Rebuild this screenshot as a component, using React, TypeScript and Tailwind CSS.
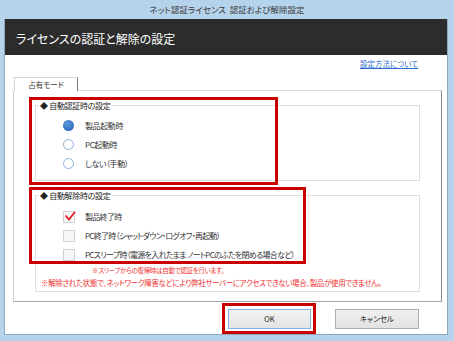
import React from "react";

const jp = "font-['Noto_Sans_CJK_JP',sans-serif] [font-feature-settings:'palt']";

function Radio({ checked, label }: { checked?: boolean; label: string }) {
  return (
    <div className="flex h-[19px] items-center pl-[27px]">
      {checked ? (
        <span className="h-[11px] w-[11px] rounded-full bg-[radial-gradient(circle_at_40%_35%,#5b96dc,#1f5fb4)]" />
      ) : (
        <span className="h-[11px] w-[11px] rounded-full border border-[#8db1dc] bg-white" />
      )}
      <span className="ml-[11px] text-[8px] leading-none tracking-[-0.4px] text-[#333]">{label}</span>
    </div>
  );
}

function Check({ checked, label }: { checked?: boolean; label: string }) {
  return (
    <div className="flex h-[19px] items-center pl-[27px]">
      <span className="relative flex h-[12px] w-[12px] items-center justify-center border border-[#d2d2d2] bg-[#f7f7f7]">
        {checked && (
          <svg width="12" height="10" viewBox="0 0 12 10" className="absolute -top-[1px] left-0">
            <path d="M1.5 4.5 L5 8.5 L11 0.8" fill="none" stroke="#e3202a" strokeWidth="1.8" />
          </svg>
        )}
      </span>
      <span className="ml-[10px] text-[8px] leading-none tracking-[-0.7px] text-[#333]">{label}</span>
    </div>
  );
}

function Group({ title, children, className }: { title: string; children: React.ReactNode; className?: string }) {
  return (
    <div className={`relative border border-[#dedede] ${className ?? ""}`}>
      <div className="absolute -top-[5px] left-[3px] bg-white px-[1px] text-[8px] leading-[10px] tracking-[-0.3px] text-[#222]">
        ◆ {title}
      </div>
      {children}
    </div>
  );
}

export default function App() {
  return (
    <div className={`relative flex h-[341px] w-[454px] flex-col overflow-hidden bg-[#b6d3ec] ${jp}`}>
      {/* window title */}
      <div className="flex h-[19px] items-center justify-center text-[8.5px] text-[#3a3a3a]">
        ネット認証ライセンス&nbsp;&nbsp;認証および解除設定
      </div>

      <div className="ml-[4px] mr-[6px] mb-[6px] flex flex-1 flex-col border-x border-b border-[#8ea8c2]">
        {/* header */}
        <div className="flex h-[36px] items-center bg-[#2c2c2c] pl-[11px] pt-[3px] text-[12px] text-white">
          ライセンスの認証と解除の設定
        </div>

        <div className="flex flex-1 flex-col bg-white">
          <div className="flex h-[22px] justify-end pr-[29px] pt-[4px]">
            <span className="text-[7.5px] leading-[9px] text-[#2a6ed0] underline">設定方法について</span>
          </div>

          {/* tab */}
          <div className="relative z-10 -mb-px ml-[9px] flex h-[14px] w-[64px] items-center justify-center border-l border-t border-r border-l-[#d6d6d6] border-t-[#d6d6d6] border-r-[#7a7a7a] bg-white text-[7.5px] text-[#333]">
            占有モード
          </div>

          {/* panel */}
          <div className="ml-[8px] flex h-[212px] w-[429px] flex-col border border-t-[#dcdcdc] border-l-[#d0d0d0] border-r-[#8a8a8a] border-b-[#a6a6a6] pl-[21px] pt-[14px]">
            <Group title="自動認証時の設定" className="h-[76px] w-[385px]">
              <div className="flex flex-col pt-[10px]">
                <Radio checked label="製品起動時" />
                <Radio label="PC起動時" />
                <Radio label="しない（手動）" />
              </div>
            </Group>

            <Group title="自動解除時の設定" className="mt-[14px] h-[97px] w-[385px]">
              <div className="flex flex-col pt-[11px]">
                <Check checked label="製品終了時" />
                <Check label="PC終了時（シャットダウン・ログオフ・再起動）" />
                <Check label="PCスリープ時（電源を入れたまま ノートPCのふたを閉める場合など）" />
                <div className="flex h-[10px] items-end pl-[56px]">
                  <div className="text-[6.5px] leading-[8px] tracking-[-0.3px] text-[#f03030]">
                    ※スリープからの復帰時は自動で認証を行います。
                  </div>
                </div>
                <div className="mt-[4px] pl-[5px] text-[7.5px] leading-[10px] tracking-[-0.35px] text-[#f03030]">
                  ※解除された状態で、ネットワーク障害などにより弊社サーバーにアクセスできない場合、製品が使用できません。
                </div>
              </div>
            </Group>
          </div>

          {/* buttons */}
          <div className="mt-[7px] flex justify-end gap-[24px] pr-[28px]">
            <button className="flex h-[20px] w-[83px] items-center justify-center border border-[#7fb2e6] bg-gradient-to-b from-[#f2f2f2] to-[#e3e3e3] text-[7.5px] text-[#222]">
              OK
            </button>
            <button className="flex h-[20px] w-[84px] items-center justify-center border border-[#adadad] bg-gradient-to-b from-[#f0f0f0] to-[#e2e2e2] text-[7.5px] text-[#222]">
              キャンセル
            </button>
          </div>
        </div>
      </div>

      {/* annotation boxes */}
      <div className="pointer-events-none absolute left-[29px] top-[97px] h-[88px] w-[249px] border-[3px] border-[#c80000]" />
      <div className="pointer-events-none absolute left-[29px] top-[187px] h-[77px] w-[277px] border-[3px] border-[#c80000]" />
      <div className="pointer-events-none absolute left-[222px] top-[303px] h-[31px] w-[94px] border-[3px] border-[#c80000]" />
    </div>
  );
}
